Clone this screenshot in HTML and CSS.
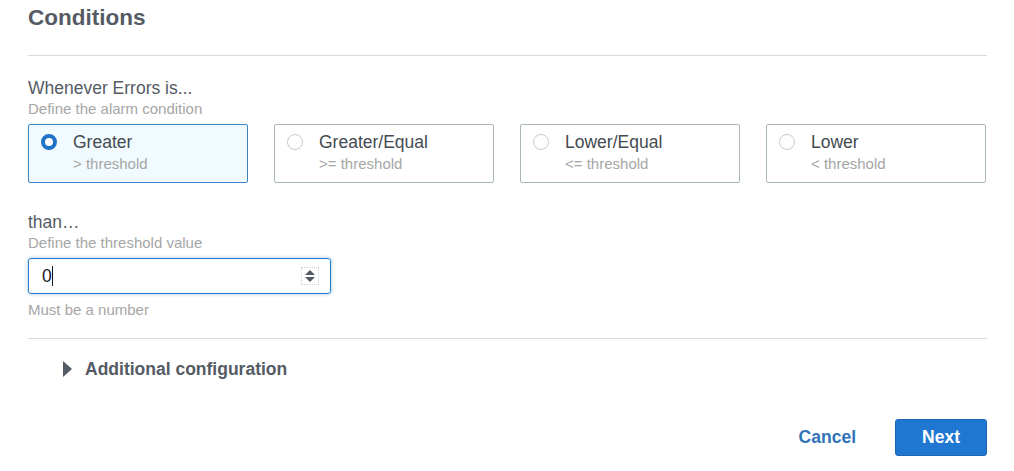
FILE: index.html
```html
<!DOCTYPE html>
<html lang="en">
<head>
<meta charset="utf-8">
<title>Conditions</title>
<link rel="stylesheet" href="styles.css">
</head>
<body>
<div class="page">
  <div class="header">
    <h1 class="title">Conditions</h1>
  </div>

  <div class="field">
    <div class="label">Whenever Errors is...</div>
    <div class="desc">Define the alarm condition</div>
    <div class="tiles">
      <div class="tile selected">
        <span class="radio on"></span>
        <div class="tile-text">
          <div class="tile-label">Greater</div>
          <div class="tile-sub">&gt; threshold</div>
        </div>
      </div>
      <div class="tile">
        <span class="radio"></span>
        <div class="tile-text">
          <div class="tile-label">Greater/Equal</div>
          <div class="tile-sub">&gt;= threshold</div>
        </div>
      </div>
      <div class="tile">
        <span class="radio"></span>
        <div class="tile-text">
          <div class="tile-label">Lower/Equal</div>
          <div class="tile-sub">&lt;= threshold</div>
        </div>
      </div>
      <div class="tile">
        <span class="radio"></span>
        <div class="tile-text">
          <div class="tile-label">Lower</div>
          <div class="tile-sub">&lt; threshold</div>
        </div>
      </div>
    </div>
  </div>

  <div class="field field-than">
    <div class="label">than…</div>
    <div class="desc">Define the threshold value</div>
    <div class="input">
      <span class="value">0</span><span class="caret"></span>
      <span class="spinner">
        <svg width="12" height="14" viewBox="0 0 12 14"><path d="M6 1 L11 6 H1 Z" fill="#545b64"/><path d="M6 13 L11 8 H1 Z" fill="#545b64"/></svg>
      </span>
    </div>
    <div class="hint">Must be a number</div>
  </div>

  <div class="expander">
    <svg class="caret-icon" width="9" height="16" viewBox="0 0 9 16"><path d="M0 0 L9 8 L0 16 Z" fill="#545b64"/></svg>
    <span class="expander-label">Additional configuration</span>
  </div>

  <div class="actions">
    <button class="btn btn-link">Cancel</button>
    <button class="btn btn-primary">Next</button>
  </div>
</div>
</body>
</html>
```

FILE: styles.css
```css
* { box-sizing: border-box; }

body {
  margin: 0;
  background: #ffffff;
  font-family: "Liberation Sans", Arial, sans-serif;
  color: #545b64;
}

.page {
  padding: 0 27px 0 28px;
}

.header {
  padding-top: 5px;
  padding-bottom: 24px;
  border-bottom: 1px solid #d5dbdb;
}

.title {
  margin: 0;
  font-size: 22.5px;
  line-height: 26px;
  font-weight: bold;
  color: #545b64;
}

.field {
  padding-top: 22px;
}

.label {
  font-size: 17.5px;
  line-height: 20px;
  color: #545b64;
}

.desc {
  margin-top: 2px;
  font-size: 15px;
  line-height: 18px;
  color: #a6a6a6;
}

.tiles {
  margin-top: 6px;
  display: grid;
  grid-template-columns: repeat(4, 220px);
  column-gap: 26px;
}

.tile {
  height: 59px;
  border: 1px solid #aab7b8;
  border-radius: 2px;
  padding: 7px 10px 9px 13px;
  display: flex;
  align-items: flex-start;
  gap: 16px;
  background: #fff;
}

.tile.selected {
  background: #f1faff;
  border-color: #3a86c8;
}

.radio {
  flex: none;
  width: 16px;
  height: 16px;
  margin-top: 2px;
  margin-left: -1px;
  border-radius: 50%;
  border: 1px solid #c5cbcc;
  background: #fff;
}

.radio.on {
  border: 4.5px solid #1f72c6;
  background: #fff;
}

.tile-label {
  font-size: 17.5px;
  line-height: 20px;
  color: #444b52;
}

.tile-sub {
  margin-top: 3px;
  font-size: 15px;
  line-height: 18px;
  color: #a6a6a6;
}

.field-than {
  padding-top: 29px;
}

.input {
  margin-top: 6px;
  width: 303px;
  height: 36px;
  border: 1px solid #2b7bc4;
  border-radius: 3px;
  box-shadow: 0 0 3px 1px rgba(43, 123, 196, 0.28);
  display: flex;
  align-items: center;
  padding: 0 13px 0 13px;
  font-size: 17.5px;
  color: #16191f;
}

.value {
  line-height: 20px;
}

.caret {
  width: 1px;
  height: 20px;
  background: #16191f;
}

.spinner {
  margin-left: auto;
  margin-right: -1px;
  display: flex;
  align-items: center;
  padding: 1px 2px;
  outline: 1px dotted #c8d3dc;
}

.spinner svg { display: block; }

.hint {
  margin-top: 7px;
  font-size: 15px;
  line-height: 18px;
  color: #a6a6a6;
  padding-bottom: 19px;
  border-bottom: 1px solid #d5dbdb;
}

.expander {
  padding-top: 18px;
  padding-left: 35px;
  display: flex;
  align-items: center;
  gap: 13px;
  height: 42px;
}

.caret-icon { display: block; }

.expander-label {
  font-size: 17.5px;
  line-height: 24px;
  font-weight: bold;
  color: #545b64;
}

.actions {
  margin-top: 38px;
  display: flex;
  justify-content: flex-end;
  align-items: center;
  gap: 19px;
}

.btn {
  font-family: "Liberation Sans", Arial, sans-serif;
  font-size: 17.5px;
  font-weight: bold;
  height: 37px;
  border-radius: 3px;
  cursor: pointer;
}

.btn-link {
  background: transparent;
  border: none;
  color: #2e73b8;
  padding: 0 20px;
}

.btn-primary {
  width: 92px;
  background: #2077d2;
  border: 1px solid #1b67b5;
  color: #ffffff;
  padding: 0;
}
```
